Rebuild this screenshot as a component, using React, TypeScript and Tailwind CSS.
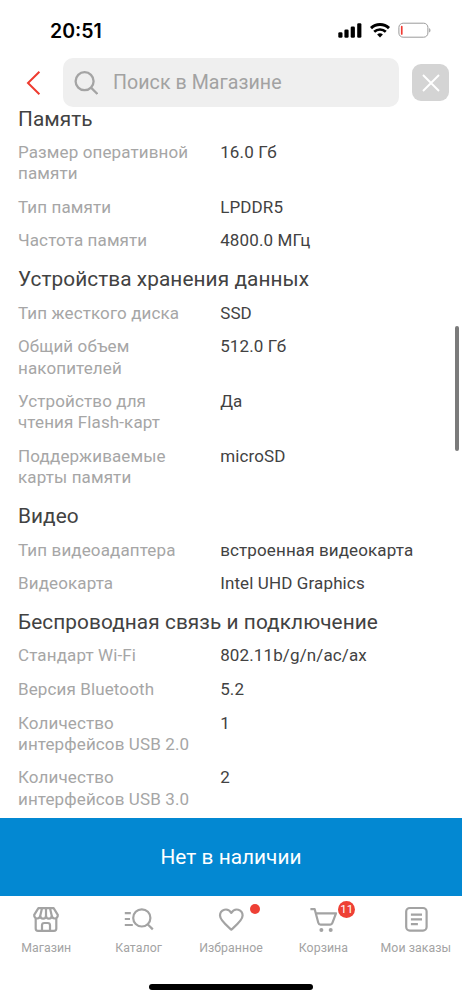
import React from 'react'

interface Spec {
  label: string[]
  value: string
}

interface SpecGroup {
  title: string
  specs: Spec[]
}

const groups: SpecGroup[] = [
  {
    title: 'Память',
    specs: [
      { label: ['Размер оперативной', 'памяти'], value: '16.0 Гб' },
      { label: ['Тип памяти'], value: 'LPDDR5' },
      { label: ['Частота памяти'], value: '4800.0 МГц' },
    ],
  },
  {
    title: 'Устройства хранения данных',
    specs: [
      { label: ['Тип жесткого диска'], value: 'SSD' },
      { label: ['Общий объем', 'накопителей'], value: '512.0 Гб' },
      { label: ['Устройство для', 'чтения Flash-карт'], value: 'Да' },
      { label: ['Поддерживаемые', 'карты памяти'], value: 'microSD' },
    ],
  },
  {
    title: 'Видео',
    specs: [
      { label: ['Тип видеоадаптера'], value: 'встроенная видеокарта' },
      { label: ['Видеокарта'], value: 'Intel UHD Graphics' },
    ],
  },
  {
    title: 'Беспроводная связь и подключение',
    specs: [
      { label: ['Стандарт Wi-Fi'], value: '802.11b/g/n/ac/ax' },
      { label: ['Версия Bluetooth'], value: '5.2' },
      { label: ['Количество', 'интерфейсов USB 2.0'], value: '1' },
      { label: ['Количество', 'интерфейсов USB 3.0'], value: '2' },
    ],
  },
]

function StatusBar() {
  return (
    <div className="flex h-[57px] shrink-0 items-start justify-between pl-[50px] pr-[31px] pt-[19px]">
      <span className="font-['Inter',sans-serif] text-[19.5px] font-semibold leading-6 text-black">20:51</span>
      <div className="flex items-center pt-[3px]">
        <svg className="h-4 w-6" viewBox="0 0 24 16">
          <rect x="0.3" y="10.2" width="4.2" height="5.5" rx="1.3" />
          <rect x="6.4" y="7.4" width="4.2" height="8.3" rx="1.3" />
          <rect x="12.7" y="4.4" width="4.2" height="11.3" rx="1.3" />
          <rect x="19.2" y="1.2" width="4.2" height="14.5" rx="1.3" />
        </svg>
        <svg className="ml-2 h-4 w-5" viewBox="0 0 20 16" fill="none" stroke="#000">
          <path d="M1 6.1a13 13 0 0 1 18 0" strokeWidth="2.9" />
          <path d="M4.2 9.8a8.4 8.4 0 0 1 11.6 0" strokeWidth="2.7" />
          <path d="M10 15.4 7.1 12.5a4.4 4.4 0 0 1 5.8 0z" fill="#000" stroke="none" />
        </svg>
        <svg className="ml-2 h-4 w-[33px]" viewBox="0 0 33 16">
          <rect x="0.9" y="1.2" width="29" height="14" rx="4.2" fill="none" stroke="#9a9a9a" />
          <rect x="2.9" y="3.8" width="1.7" height="9" rx="0.85" fill="#f03a32" />
          <path d="M31.2 6v4.6c1.7-.8 1.7-3.8 0-4.6z" fill="#9a9a9a" />
        </svg>
      </div>
    </div>
  )
}

function SearchHeader() {
  return (
    <header className="flex h-[50px] shrink-0 items-center pl-[26px] pr-[12px] pt-px">
      <button aria-label="Назад">
        <svg className="h-6 w-4" viewBox="0 0 16 24" fill="none" stroke="#ee3b2f" strokeWidth="2">
          <path d="M13.4 0.8 2 12l11.4 11.2" />
        </svg>
      </button>
      <div className="ml-[21px] flex h-[49px] w-[336px] shrink-0 items-center rounded-[10px] bg-[#efefef] pl-[11px]">
        <svg className="h-6 w-6" viewBox="0 0 24 24" fill="none" stroke="#a4a4a4" strokeWidth="2.3">
          <circle cx="10.6" cy="10.2" r="9" />
          <path d="m17 16.7 6.4 6.2" />
        </svg>
        <span className="ml-[15px] text-[19.6px] tracking-[0.05px] text-[#a2a2a2]">Поиск в Магазине</span>
      </div>
      <button className="ml-[13px] flex h-[37px] w-[37px] shrink-0 items-center justify-center rounded-[9px] bg-[#d4d4d4]" aria-label="Очистить">
        <svg className="h-[18px] w-[18px]" viewBox="0 0 18 18" fill="none" stroke="#fff" strokeWidth="1.9">
          <path d="m1 1 16 16M17 1 1 17" />
        </svg>
      </button>
    </header>
  )
}

interface TabProps {
  label: string
  badge?: React.ReactNode
  children: React.ReactNode
}

function Tab({ label, badge, children }: TabProps) {
  return (
    <a className="flex flex-1 flex-col items-center">
      <div className="relative h-8 w-8">
        <svg className="h-8 w-8" viewBox="0 0 32 32" fill="none" stroke="#a3a3a3" strokeWidth="2.2" strokeLinejoin="round">
          {children}
        </svg>
        {badge}
      </div>
      <span className="mt-[4.5px] whitespace-nowrap text-[12.3px] leading-4 tracking-[0.06px] text-[#a3a3a3]">{label}</span>
    </a>
  )
}

export default function App(): React.JSX.Element {
  return (
    <div className="relative flex h-[999px] w-[462px] flex-col overflow-hidden bg-white font-['Roboto',sans-serif]">
      <StatusBar />
      <SearchHeader />

      <main className="-mt-[0.3px] h-[711.3px] shrink-0 pl-[18px]">
        {groups.map((group) => (
          <section key={group.title} className="pt-[3.4px] first:pt-0">
            <h2 className="mb-[11.3px] whitespace-nowrap text-[20.8px] leading-6 tracking-[0.07px] text-[#424242]">{group.title}</h2>
            {group.specs.map((spec) => (
              <div key={spec.label.join(' ')} className="mb-[12.35px] flex text-[17px] leading-[21.25px] tracking-[0.12px]">
                <div className="w-[202.2px] text-[#a6a6a6]">
                  {spec.label.map((line) => (
                    <div key={line}>{line}</div>
                  ))}
                </div>
                <div className="text-[#424242]">{spec.value}</div>
              </div>
            ))}
          </section>
        ))}
      </main>

      {/* Scroll indicator */}
      <div className="absolute left-[454.5px] top-[326px] h-[125px] w-[4px] rounded-full bg-[#7b7b7b]" />

      <button className="flex h-[78px] shrink-0 items-center justify-center bg-[#0388d2] pt-[2px] text-[20.8px] tracking-[0.04px] text-white">
        Нет в наличии
      </button>

      <nav className="flex h-[81px] shrink-0 pt-[7px]">
        <Tab label="Магазин">
          <path d="M8.4 5.2h15.2l4.2 6.6c.3 4.8-5.8 4.8-6.1.6 0 4.4-5.7 4.4-5.7 0 0 4.4-5.7 4.4-5.7 0-.3 4.2-6.4 4.2-6.1-.6zM12 5.2l-1.7 7.2M20 5.2l1.7 7.2M16 5.2v7.2" />
          <path d="M5.7 15.5v10c0 1.5.8 2.3 2.3 2.3h16c1.5 0 2.3-.8 2.3-2.3v-10M12 27.6v-5.3c0-1.5.8-2.3 2.3-2.3h3.4c1.5 0 2.3.8 2.3 2.3v5.3" />
        </Tab>
        <Tab label="Каталог">
          <circle cx="18.8" cy="14.9" r="8.6" />
          <path d="m24.6 21.2 5.2 5.2M1.8 10.2h6M1.8 16h5.2M1.8 22h8" />
        </Tab>
        <Tab
          label="Избранное"
          badge={<span className="absolute left-[35px] top-[1px] h-[10px] w-[10px] rounded-full bg-[#ee4035]" />}
        >
          <path d="M16.3 26.6C11.5 22.4 5 17.5 5 12.6c0-6.2 7.7-8.5 11.3-2.7 3.6-5.8 11.3-3.5 11.3 2.7 0 4.9-6.5 9.8-11.3 14z" />
        </Tab>
        <Tab
          label="Корзина"
          badge={
            <span className="absolute left-[30.5px] top-[-2.5px] flex h-[17.5px] w-[17.5px] items-center justify-center rounded-full bg-[#ee4035] text-[11.5px] leading-none text-white">
              11
            </span>
          }
        >
          <path d="M3.4 6.2h4.3l3.6 13.6c.3 1.2 1 1.8 2.2 1.8h9.7c1.1 0 1.8-.6 2.2-1.7l3.6-9.6H8.7" />
          <circle cx="14.4" cy="27" r="2" fill="#a3a3a3" stroke="none" />
          <circle cx="23.7" cy="27" r="2" fill="#a3a3a3" stroke="none" />
        </Tab>
        <Tab label="Мои заказы">
          <rect x="6.2" y="5" width="20.4" height="22.6" rx="3.6" />
          <path d="M10.9 11.6H22M10.9 16.4H22M10.9 21.2h7" />
        </Tab>
      </nav>

      <div className="ml-[149px] mt-[7px] h-[6px] w-[164px] rounded-full bg-black" />
    </div>
  )
}
